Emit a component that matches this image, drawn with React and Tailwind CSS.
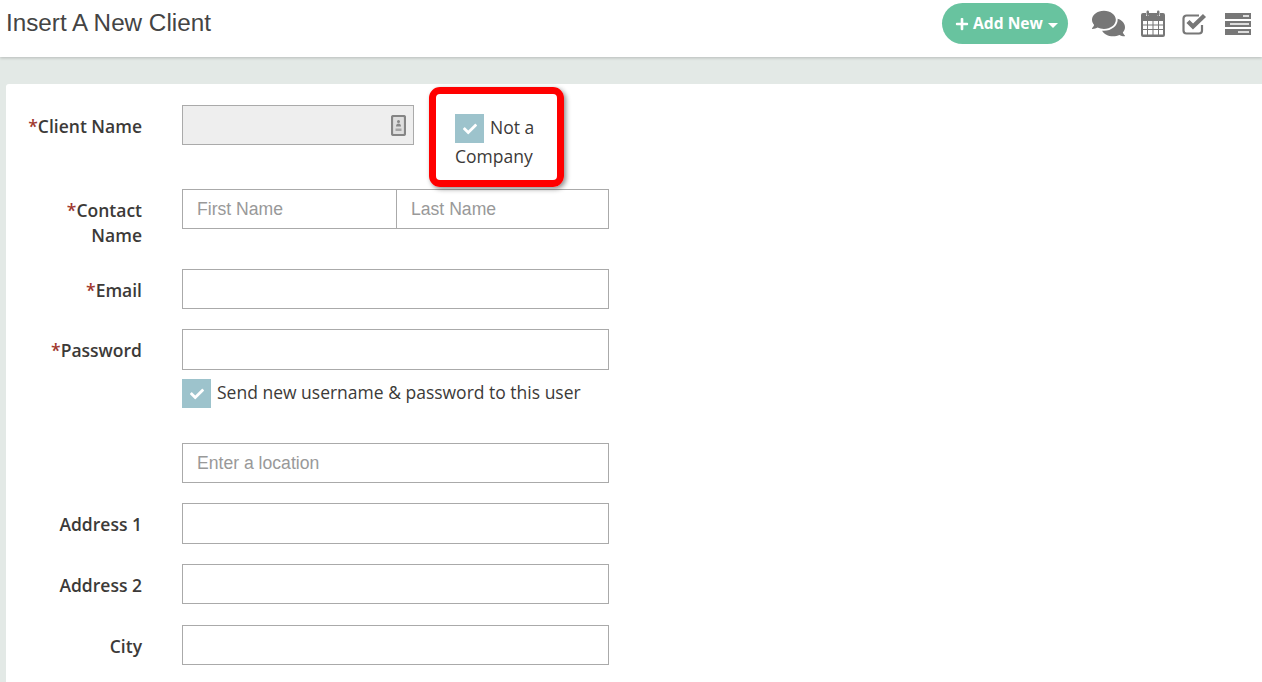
import { FaComments, FaPlus, FaCheck } from "react-icons/fa";

const sans = "font-['Open_Sans',sans-serif]";
const arial = "font-['Liberation_Sans',Arial,sans-serif]";

function CalendarIcon() {
  return (
    <svg width="24" height="27" viewBox="0 0 24 27" className="text-[#777]" fill="currentColor">
      <path fillRule="evenodd" d="M2 3h3v3h3V3h8v3h3V3h3a2 2 0 0 1 2 2v20a2 2 0 0 1-2 2H2a2 2 0 0 1-2-2V5a2 2 0 0 1 2-2Zm0 8v3.500h4V11H2Zm5 0v3.500h4.500V11H7Zm5.500 0v3.500H17V11h-4.500ZM18 11v3.500h4V11h-4ZM2 15.500V19h4v-3.500H2Zm5 0V19h4.500v-3.500H7Zm5.500 0V19H17v-3.500h-4.500Zm5.500 0V19h4v-3.500h-4ZM2 20v4.500h4V20H2Zm5 0v4.500h4.500V20H7Zm5.500 0v4.500H17V20h-4.500Zm5.500 0v4.500h4V20h-4Z" />
      <rect x="5.500" y="0.500" width="2.500" height="5.500" rx="1.200" />
      <rect x="16" y="0.500" width="2.500" height="5.500" rx="1.200" />
    </svg>
  );
}

function TaskIcon() {
  return (
    <svg width="25" height="22" viewBox="0 0 25 22" fill="none" className="text-[#777]">
      <path d="M20 12v5.500a3 3 0 0 1-3 3H4.500a3 3 0 0 1-3-3V5.500a3 3 0 0 1 3-3H17" stroke="currentColor" strokeWidth="2.200" />
      <path d="M6 8.500 11 13.500 22.500 2.500" stroke="currentColor" strokeWidth="4.400" />
    </svg>
  );
}

function ServerIcon() {
  return (
    <svg width="26" height="22" viewBox="0 0 26 22" className="text-[#777]" fill="currentColor">
      <path fillRule="evenodd" d="M0 0h26v6H0V0Zm18 2.200v1.600h6V2.200h-6Z" />
      <path fillRule="evenodd" d="M0 8h26v6H0V8Zm5 2.200v1.600h19v-1.600H5Z" />
      <path fillRule="evenodd" d="M0 16h26v6H0v-6Zm13 2.200v1.600h11v-1.600H13Z" />
    </svg>
  );
}

function ContactCard() {
  return (
    <svg width="15" height="21" viewBox="0 0 15 21" fill="none">
      <rect x="1" y="1" width="13" height="19" rx="1.500" stroke="#858585" strokeWidth="2.200" fill="#dedede" />
      <circle cx="7.500" cy="6.500" r="1.500" fill="#888" />
      <path d="M5 11.500c0-2 1-3 2.500-3s2.500 1 2.500 3H5Z" fill="#888" />
      <rect x="4.500" y="13.500" width="6" height="2.500" fill="#a5a5a5" />
    </svg>
  );
}

function Check() {
  return (
    <span className="inline-flex h-[29px] w-[29px] shrink-0 items-center justify-center bg-[#9dc3cc] text-white">
      <FaCheck size={14} />
    </span>
  );
}

function Label({ children, required, className = "" }) {
  return (
    <label className={`w-[136px] shrink-0 text-right text-[17.500px] leading-[25px] font-semibold text-[#3c3a38] ${className}`}>
      {required && <span className="text-[#a1392f]">*</span>}
      {children}
    </label>
  );
}

function Input({ placeholder, className = "w-[427px] h-10" }) {
  return (
    <input
      placeholder={placeholder}
      className={`${arial} border border-[#aaa] bg-white px-[14px] text-[17.600px] text-[#333] outline-none placeholder:text-[#999] ${className}`}
    />
  );
}

export default function App() {
  return (
    <div className={`${sans} h-[682px] overflow-hidden bg-[#e3e9e6]`}>
      <header className="flex h-[57px] items-start justify-between bg-white shadow-[0_1px_3px_rgba(0,0,0,0.2)]">
        <h1 className={`${arial} pt-[9px] pl-[6px] text-[24.250px] leading-[28px] text-[#444]`}>Insert A New Client</h1>
        <div className="flex items-center pt-[3px] pr-[11px]">
          <button className="flex h-[41px] w-[126px] items-center justify-center gap-[4px] rounded-full bg-[#68c39f] pl-[3px] text-[15.600px] font-bold text-white">
            <FaPlus size={14} />
            Add New
            <span className="mt-[3px] ml-px h-0 w-0 border-x-[5px] border-t-[5px] border-x-transparent border-t-white" />
          </button>
          <span className="ml-[24px] text-[#777]">
            <FaComments size={33} />
          </span>
          <span className="ml-[16px]"><CalendarIcon /></span>
          <span className="ml-[17px]"><TaskIcon /></span>
          <span className="ml-[18px]"><ServerIcon /></span>
        </div>
      </header>

      <main className="mt-[27px] ml-[6px] h-[598px] rounded-tl-[3px] bg-white pt-[21px]">
        <div className="mb-[44px] flex h-10 items-start">
          <Label required className="pt-[9px]">Client Name</Label>
          <div className="ml-10 flex h-10 w-[232px] items-center justify-end border border-[#aaa] bg-[#eee] pr-[7px]">
            <ContactCard />
          </div>
          <div className="relative ml-[41px] w-[90px] pt-[9px] text-[17.500px] leading-[29px] text-[#3c3a38]">
            <span className="flex items-start gap-[6px] leading-[27px]">
              <Check />
              <span>Not a</span>
            </span>
            <span className="-mt-px block">Company</span>
            <div className="absolute top-[-18px] left-[-26px] h-[100px] w-[135px] rounded-[11px] border-[7px] border-[#f00] shadow-[2px_2px_5px_rgba(0,0,0,0.45)]" />
          </div>
        </div>

        <div className="mb-[21px] flex items-start">
          <Label required className="pt-[9px]">Contact<br />Name</Label>
          <div className="ml-10 flex">
            <Input placeholder="First Name" className="h-10 w-[215px]" />
            <Input placeholder="Last Name" className="h-10 w-[212px] border-l-0" />
          </div>
        </div>

        <div className="mb-5 flex items-start">
          <Label required className="pt-[9px]">Email</Label>
          <div className="ml-10"><Input /></div>
        </div>

        <div className="flex items-start">
          <Label required className="pt-[9px]">Password</Label>
          <div className="ml-10">
            <Input className="block h-[41px] w-[427px]" />
            <div className="mt-[9px] flex items-start gap-[6px] text-[17.500px] leading-[27px] text-[#3c3a38]">
              <Check />
              <span>Send new username &amp; password to this user</span>
            </div>
          </div>
        </div>

        <div className="mt-[35px] mb-5 flex">
          <div className="w-[136px] shrink-0" />
          <div className="ml-10"><Input placeholder="Enter a location" /></div>
        </div>

        <div className="mb-5 flex items-start">
          <Label className="pt-[9px]">Address 1</Label>
          <div className="ml-10"><Input className="h-[41px] w-[427px]" /></div>
        </div>

        <div className="mb-[21px] flex items-start">
          <Label className="pt-[9px]">Address 2</Label>
          <div className="ml-10"><Input /></div>
        </div>

        <div className="flex items-start">
          <Label className="pt-[9px]">City</Label>
          <div className="ml-10"><Input /></div>
        </div>
      </main>
    </div>
  );
}
